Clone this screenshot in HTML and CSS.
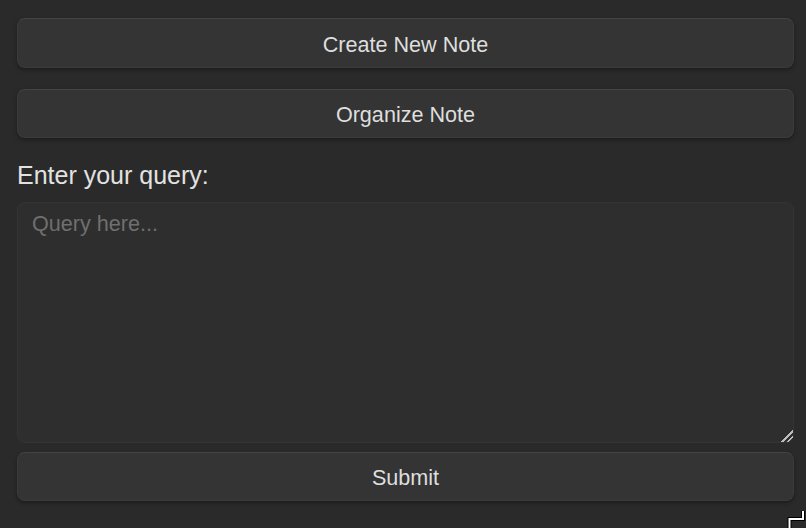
FILE: index.html
```html
<!DOCTYPE html>
<html lang="en">
<head>
<meta charset="utf-8">
<title>Notes</title>
<link rel="stylesheet" href="styles.css">
</head>
<body>
<main class="panel">
  <button class="btn btn-first" type="button">Create New Note</button>
  <button class="btn btn-second" type="button">Organize Note</button>
  <label class="query-label" for="query">Enter your query:</label>
  <textarea id="query" class="query" placeholder="Query here..."></textarea>
  <button class="btn btn-submit" type="button">Submit</button>
</main>
<svg class="cursor-mark" width="20" height="20" viewBox="0 0 20 20" aria-hidden="true">
  <polyline points="16,0 16,8 2.5,8 2.5,20" fill="none" stroke="#000" stroke-width="4"/>
  <polyline points="16,0 16,8 2.5,8 2.5,20" fill="none" stroke="#fff" stroke-width="2"/>
</svg>
</body>
</html>
```
FILE: styles.css
```css
html, body {
  margin: 0;
  height: 100%;
  background: #2a2a2a;
  overflow: hidden;
}
body {
  font-family: "Liberation Sans", Arial, sans-serif;
  color: #dedede;
  position: relative;
}
.panel {
  display: flex;
  flex-direction: column;
  padding: 18px 12px 0 17px;
}
.btn {
  display: block;
  width: 100%;
  height: 50px;
  margin: 0;
  padding: 3px 0 0;
  font-family: "Liberation Sans", Arial, sans-serif;
  font-size: 21.6px;
  color: #dedede;
  background: #343434;
  border: 1px solid #3b3b3b;
  border-top-color: #444444;
  border-radius: 8px;
  box-shadow: 0 2px 4px rgba(0, 0, 0, 0.35);
  cursor: pointer;
}
.btn-second {
  margin-top: 21px;
  height: 49px;
}
.query-label {
  margin-top: 23px;
  font-size: 25px;
  line-height: 29px;
  color: #e2e2e2;
}
.query {
  margin-top: 12px;
  height: 241px;
  box-sizing: border-box;
  padding: 8px 14px;
  font-family: "Liberation Sans", Arial, sans-serif;
  font-size: 21.6px;
  color: #dedede;
  background: #2e2e2e;
  border: 1px solid #343434;
  border-radius: 8px;
  outline: none;
  color-scheme: dark;
}
.query::-webkit-resizer {
  background:
    linear-gradient(135deg,
      transparent 0, transparent 60%,
      #bdbdbd 60%, #bdbdbd 67%,
      transparent 67%, transparent 78%,
      #bdbdbd 78%, #bdbdbd 85%,
      transparent 85%);
}
.query::placeholder {
  color: #6f6f6f;
}
.btn-submit {
  margin-top: 9px;
  height: 49px;
}
.cursor-mark {
  position: absolute;
  left: 787px;
  top: 511px;
}
```
